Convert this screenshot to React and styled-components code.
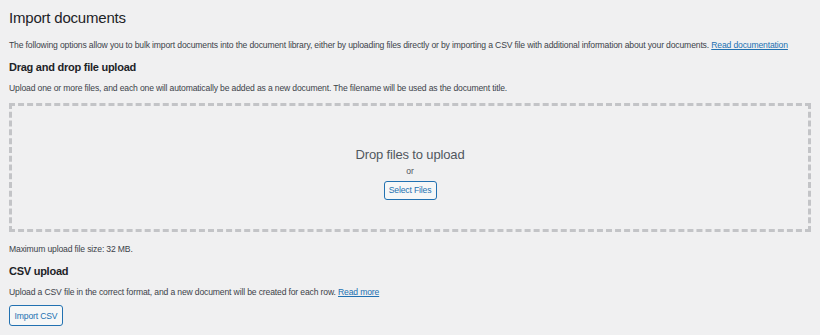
import React from 'react';
import styled, { createGlobalStyle } from 'styled-components';

const GlobalStyle = createGlobalStyle`
	html, body {
		margin: 0;
		padding: 0;
		background: #f0f0f1;
	}
	body {
		font-family: "Liberation Sans", Arial, sans-serif;
		color: #3c434a;
	}
`;

const Wrap = styled.div`
	padding: 7px 9px 0 9px;
	width: 820px;
	height: 335px;
	box-sizing: border-box;
`;

const Title = styled.h1`
	margin: 0;
	font-size: 15px;
	font-weight: 400;
	letter-spacing: -0.2px;
	line-height: 22px;
	color: #1d2327;
`;

const Text = styled.p`
	margin: ${p => p.$mt || 0}px 0 0;
	font-size: 8.6px;
	letter-spacing: -0.15px;
	line-height: 12px;
	color: #3c434a;
	white-space: nowrap;
`;

const Link = styled.a`
	color: #2271b1;
	text-decoration: underline;
	cursor: pointer;
`;

const Heading = styled.h2`
	margin: ${p => p.$mt || 0}px 0 0;
	font-size: 11px;
	font-weight: 700;
	letter-spacing: -0.25px;
	line-height: 16px;
	color: #1d2327;
`;

const DropZone = styled.div`
	margin-top: 9px;
	height: 129px;
	box-sizing: border-box;
	border: 3px dashed #c3c4c7;
	display: flex;
	flex-direction: column;
	align-items: center;
	justify-content: center;
	padding-top: 10px;
`;

const DropTitle = styled.div`
	font-size: 13px;
	letter-spacing: -0.15px;
	line-height: 18px;
	color: #50575e;
`;

const Or = styled.div`
	font-size: 8.6px;
	line-height: 12px;
	margin-top: 1px;
	color: #50575e;
`;

const Button = styled.button`
	margin-top: ${p => p.$mt || 0}px;
	font-family: inherit;
	font-size: 8.6px;
	letter-spacing: -0.15px;
	white-space: nowrap;
	color: #2271b1;
	background: #f6f7f7;
	border: 1px solid #2271b1;
	border-radius: 3px;
	padding: 0;
	width: ${p => p.$w}px;
	height: ${p => p.$h || 20}px;
	cursor: pointer;
`;

export default function App() {
	return (
		<>
			<GlobalStyle />
			<Wrap>
				<Title>Import documents</Title>
				<Text $mt={10}>
					The following options allow you to bulk import documents into the document library, either by uploading files directly or by importing a CSV file with additional information about your documents.{' '}
					<Link>Read documentation</Link>
				</Text>
				<Heading $mt={8}>Drag and drop file upload</Heading>
				<Text $mt={7}>
					Upload one or more files, and each one will automatically be added as a new document. The filename will be used as the document title.
				</Text>
				<DropZone>
					<DropTitle>Drop files to upload</DropTitle>
					<Or>or</Or>
					<Button $mt={4} $w={53} $h={19}>Select Files</Button>
				</DropZone>
				<Text $mt={11}>Maximum upload file size: 32 MB.</Text>
				<Heading $mt={8}>CSV upload</Heading>
				<Text $mt={7}>
					Upload a CSV file in the correct format, and a new document will be created for each row.{' '}
					<Link>Read more</Link>
				</Text>
				<Button $mt={7} $w={54} $h={21}>Import CSV</Button>
			</Wrap>
		</>
	);
}
